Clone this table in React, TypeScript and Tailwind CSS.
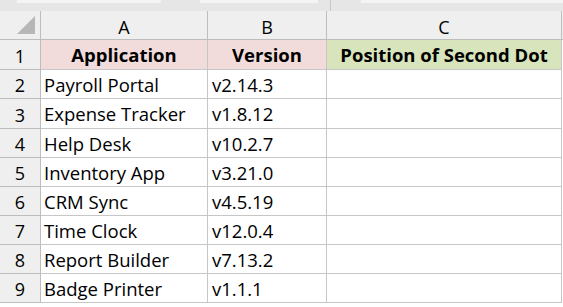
const rows = [
  ["Payroll Portal", "v2.14.3"],
  ["Expense Tracker", "v1.8.12"],
  ["Help Desk", "v10.2.7"],
  ["Inventory App", "v3.21.0"],
  ["CRM Sync", "v4.5.19"],
  ["Time Clock", "v12.0.4"],
  ["Report Builder", "v7.13.2"],
  ["Badge Printer", "v1.1.1"],
];

const heights = ["h-[30px]", "h-[29px]", "h-[30px]", "h-[29px]", "h-[29px]", "h-[29px]", "h-[29px]", "h-[29px]", "h-[29px]"];

export default function App() {
  return (
    <div className="w-[563px] h-[307px] bg-white overflow-hidden text-black font-['Open_Sans',sans-serif] text-[18.5px] leading-none">
      {/* ribbon remnant */}
      <div className="h-[11px] bg-[#e6e6e6] flex items-start">
        <div className="ml-[17px] w-[144px] h-[3px] bg-[#f4f4f4]" />
        <div className="ml-[39px] w-[118px] h-[3px] bg-[#f4f4f4]" />
        <div className="ml-[12px] w-px h-[11px] bg-[#c8c8c8]" />
        <div className="ml-[30px] flex-1 h-[3px] bg-[#f4f4f4]" />
      </div>

      {/* column headers */}
      <div className="flex h-[29px] bg-[#efefef] border-b border-[#bdbdbd] text-[18px]">
        <div className="w-[41px] border-r border-[#bdbdbd] relative">
          <div className="absolute right-[5px] bottom-[5px] w-0 h-0 border-l-[18px] border-l-transparent border-b-[18px] border-b-[#b7b7b7]" />
        </div>
        <div className="w-[167px] border-r border-[#bdbdbd] flex items-center justify-center pt-[3px]">A</div>
        <div className="w-[119px] border-r border-[#bdbdbd] flex items-center justify-center pt-[3px]">B</div>
        <div className="w-[235px] border-r border-[#bdbdbd] flex items-center justify-center pt-[3px]">C</div>
        <div className="flex-1" />
      </div>

      {/* header row 1 */}
      <div className={`flex ${heights[0]}`}>
        <div className="w-[41px] bg-[#efefef] border-r border-b border-[#bdbdbd] flex items-center justify-center pt-[2px] text-[18px]">1</div>
        <div className="w-[167px] bg-[#f2dcdb] border-r border-b border-[#c6c6c6] flex items-center justify-center pt-[2px] font-bold">Application</div>
        <div className="w-[119px] bg-[#f2dcdb] border-r border-b border-[#c6c6c6] flex items-center justify-center pt-[2px] font-bold">Version</div>
        <div className="w-[235px] bg-[#d8e4bc] border-r border-b border-[#c6c6c6] flex items-center justify-center pt-[2px] font-bold">Position of Second Dot</div>
        <div className="flex-1" />
      </div>

      {rows.map(([app, ver], i) => (
        <div key={app} className={`flex ${heights[i + 1]}`}>
          <div className="w-[41px] bg-[#efefef] border-r border-b border-[#bdbdbd] flex items-center justify-center pt-[2px] text-[18px]">{i + 2}</div>
          <div className="w-[167px] border-r border-b border-[#c6c6c6] flex items-center pl-[3px] pt-[2px]">{app}</div>
          <div className="w-[119px] border-r border-b border-[#c6c6c6] flex items-center pl-[4px] pt-[2px]">{ver}</div>
          <div className="w-[235px] border-r border-b border-[#c6c6c6]" />
          <div className="flex-1" />
        </div>
      ))}
    </div>
  );
}
